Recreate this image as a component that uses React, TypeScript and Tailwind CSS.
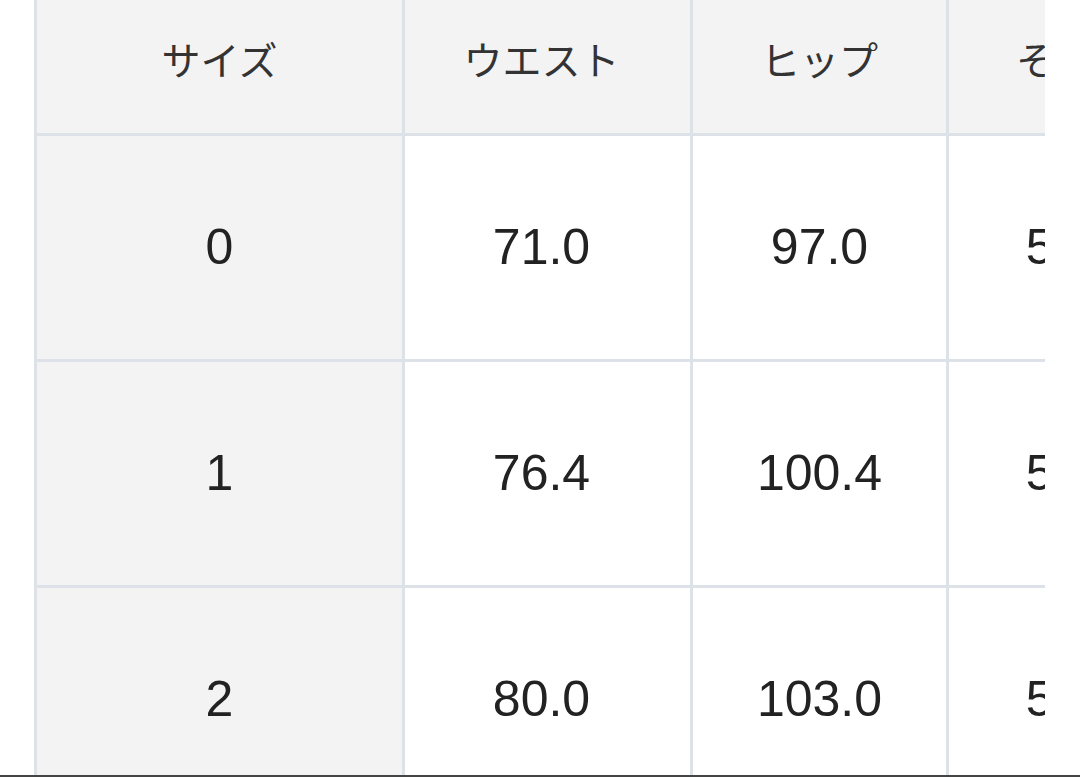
import React from 'react';

const rows = [
  { size: '0', waist: '71.0', hip: '97.0', other: '52.0' },
  { size: '1', waist: '76.4', hip: '100.4', other: '53.0' },
  { size: '2', waist: '80.0', hip: '103.0', other: '54.0' },
];

const cjk = { fontFamily: '"Noto Sans CJK JP", "Noto Sans", sans-serif' };
const num = { fontFamily: '"Liberation Sans", Arial, sans-serif' };

const headers = [
  { label: 'サイズ', pad: '' },
  { label: 'ウエスト', pad: 'pr-[12px]' },
  { label: 'ヒップ', pad: '' },
  { label: 'その他', pad: '' },
];

export default function App() {
  return (
    <div className="w-[1080px] h-[777px] bg-white overflow-hidden flex flex-col">
      <div className="flex-1 overflow-hidden pl-[34px]">
        <div className="w-[1011px] overflow-hidden -mt-[16px]">
          <div className="grid grid-cols-[365px_285px_253px_251px] gap-[3px] bg-[#dde1e8] pl-[3px] w-max">
            {headers.map((h) => (
              <div
                key={h.label}
                style={cjk}
                className={`h-[149px] bg-[#f3f3f3] flex items-center justify-center text-[39px] text-[#333] ${h.pad}`}
              >
                {h.label}
              </div>
            ))}
            {rows.map((r) => (
              <React.Fragment key={r.size}>
                <div style={num} className="h-[223px] bg-[#f3f3f3] flex items-center justify-center text-[50px] text-[#222]">
                  {r.size}
                </div>
                <div style={num} className="h-[223px] bg-white flex items-center justify-center pr-[12px] text-[50px] text-[#222]">
                  {r.waist}
                </div>
                <div style={num} className="h-[223px] bg-white flex items-center justify-center text-[50px] text-[#222]">
                  {r.hip}
                </div>
                <div style={num} className="h-[223px] bg-white flex items-center justify-center text-[50px] text-[#222]">
                  {r.other}
                </div>
              </React.Fragment>
            ))}
          </div>
        </div>
      </div>
      <div className="h-[2px] bg-[#444]" />
    </div>
  );
}
